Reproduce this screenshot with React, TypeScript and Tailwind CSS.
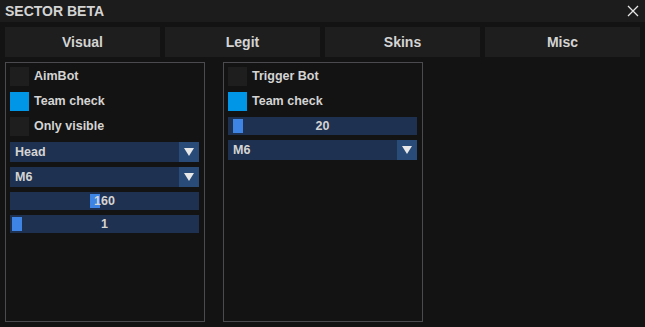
import React from 'react';

const font = { fontFamily: '"Liberation Sans", Arial, sans-serif' };

function Checkbox({ label, checked }: { label: string; checked?: boolean }) {
    return (
        <div className="flex items-center h-[19px] mb-[6px]">
            <div className={`w-[19px] h-[19px] ${checked ? 'bg-[#0096e8]' : 'bg-[#1e1e1e]'}`} />
            <span className="ml-[5px] text-[12.5px] font-bold text-[#d4d4d4]">{label}</span>
        </div>
    );
}

function Combo({ value }: { value: string }) {
    return (
        <div className="flex h-[20px] mb-[5px] bg-[#1f3150]">
            <span className="flex-1 pl-[5px] text-[12.5px] font-bold text-[#d4d4d4] leading-[20px]">{value}</span>
            <div className="w-[20px] h-full bg-[#284b78] flex items-center justify-center">
                <svg width="10" height="8" viewBox="0 0 10 8">
                    <polygon points="0,0 10,0 5,8" fill="#e8e8e8" />
                </svg>
            </div>
        </div>
    );
}

function Slider({ value, grab }: { value: string; grab: number }) {
    return (
        <div className="relative h-[18px] mb-[5px] bg-[#1f3150] flex items-center justify-center">
            <div className="absolute top-[2px] w-[10px] h-[14px] bg-[#3d84e4]" style={{ left: grab }} />
            <span className="relative text-[12.5px] font-bold text-[#d4d4d4]">{value}</span>
        </div>
    );
}

export default function App() {
    const tabs = ['Visual', 'Legit', 'Skins', 'Misc'];

    return (
        <div className="w-[645px] h-[327px] bg-[#131313] flex flex-col" style={font}>
            {/* Title bar */}
            <div className="h-[22px] bg-[#1c1c1c] flex items-center justify-between px-[5px]">
                <span className="text-[14px] font-bold text-[#d4d4d4]">SECTOR BETA</span>
                <svg width="12" height="12" viewBox="0 0 12 12" className="mr-[1px]">
                    <path d="M1 1 L11 11 M11 1 L1 11" stroke="#e6e6e6" strokeWidth="1.3" />
                </svg>
            </div>

            {/* Tabs */}
            <div className="flex gap-[5px] px-[5px] mt-[5px]">
                {tabs.map((t) => (
                    <div key={t} className="w-[155px] h-[30px] bg-[#1e1e1e] flex items-center justify-center text-[14px] font-bold text-[#d4d4d4]">
                        {t}
                    </div>
                ))}
            </div>

            {/* Panels */}
            <div className="flex gap-[18px] px-[5px] mt-[5px]">
                <div className="w-[200px] h-[260px] border border-[#4a4a4f] pl-[4px] pr-[5px] pt-[4px]">
                    <Checkbox label="AimBot" />
                    <Checkbox label="Team check" checked />
                    <Checkbox label="Only visible" />
                    <Combo value="Head" />
                    <Combo value="M6" />
                    <Slider value="160" grab={80} />
                    <Slider value="1" grab={2} />
                </div>
                <div className="w-[200px] h-[260px] border border-[#4a4a4f] pl-[4px] pr-[5px] pt-[4px]">
                    <Checkbox label="Trigger Bot" />
                    <Checkbox label="Team check" checked />
                    <Slider value="20" grab={5} />
                    <Combo value="M6" />
                </div>
            </div>
        </div>
    );
}
